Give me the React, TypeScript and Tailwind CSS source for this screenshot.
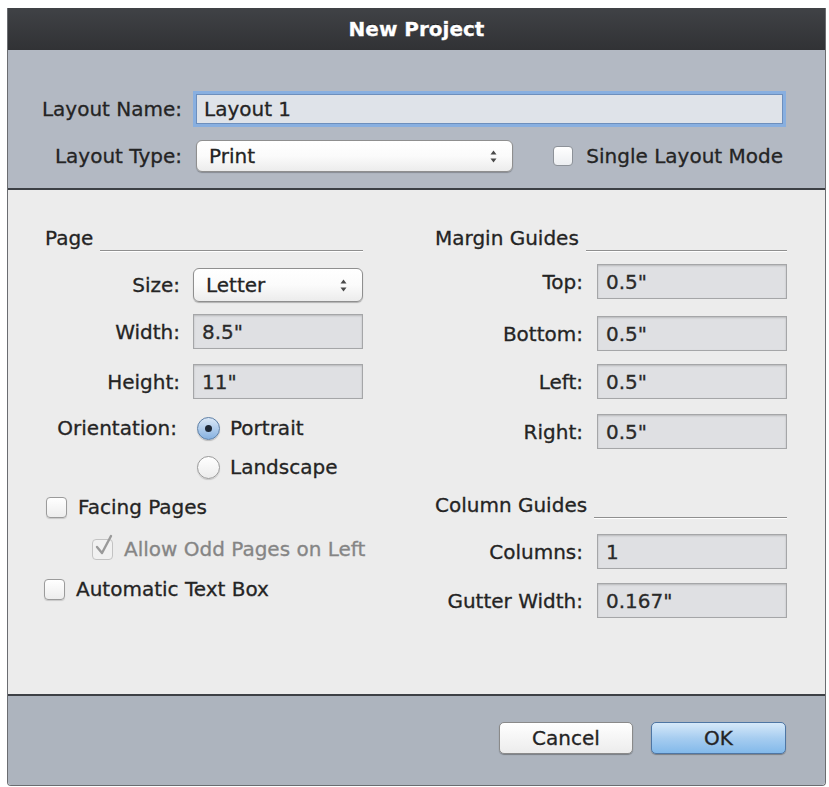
import React from "react";

function Arrows() {
  return (
    <svg width="9" height="15" viewBox="0 0 9 15" className="shrink-0">
      <path d="M4.5 1.5 L7.5 5.5 H1.5 Z" fill="#4a4a4a" />
      <path d="M4.5 13.5 L7.5 9.5 H1.5 Z" fill="#4a4a4a" />
    </svg>
  );
}

function Select({ value, className }: { value: string; className: string }) {
  return (
    <div
      className={
        "flex items-center justify-between pl-[12px] pr-[14px] rounded-[6px] border border-[#8f8f8f] bg-gradient-to-b from-white via-[#fbfbfb] to-[#ececec] shadow-[0_1px_1px_rgba(0,0,0,0.25)] " +
        className
      }
    >
      <span>{value}</span>
      <Arrows />
    </div>
  );
}

function Field({ value, className }: { value: string; className: string }) {
  return (
    <div
      className={
        "h-[35px] flex items-center pl-[8px] bg-[#dfe0e3] border border-[#a5a6a8] shadow-[inset_0_1px_2px_rgba(0,0,0,0.18)] text-[#2a2a2a] " +
        className
      }
    >
      {value}
    </div>
  );
}

function Checkbox() {
  return (
    <div className="w-[21px] h-[21px] shrink-0 rounded-[4px] border border-[#9b9b9b] bg-gradient-to-b from-white to-[#ededed] shadow-[0_1px_1px_rgba(0,0,0,0.15)]" />
  );
}

function Heading({ text }: { text: string }) {
  return (
    <div className="flex items-center h-[28px]">
      <span className="shrink-0">{text}</span>
      <div className="flex-1 self-end mb-[1px] ml-[7px] h-[1px] bg-[#8f8f8f] shadow-[0_1px_0_#ffffff]" />
    </div>
  );
}

export default function App() {
  return (
    <div className="w-[829px] h-[787px] bg-white pt-[8px] pl-[7px] font-['DejaVu_Sans',sans-serif] text-[20px] text-[#242424] leading-none whitespace-nowrap [-webkit-text-stroke:0.3px_currentColor]">
      <div className="w-[819px] h-[778px] flex flex-col border-x border-b border-[#6b6d71] rounded-b-[4px] overflow-hidden">
        {/* Title bar */}
        <div className="h-[42px] shrink-0 flex items-center justify-center bg-gradient-to-b from-[#404246] to-[#313235] text-white font-bold [text-shadow:0_-1px_0_rgba(0,0,0,0.6)]">
          New Project
        </div>

        {/* Top section */}
        <div className="h-[140px] shrink-0 bg-[#b3b9c3] border-b-2 border-[#3d4045] pt-[44px] pr-[42px]">
          <div className="flex items-center h-[30px]">
            <div className="w-[174px] text-right shrink-0">Layout Name:</div>
            <div className="ml-[14px] flex-1 h-[30px] flex items-center pl-[7px] bg-[#dfe3e9] border border-[#6d8fbd] ring-[3px] ring-[#88afe0]">
              Layout 1
            </div>
          </div>
          <div className="flex items-center h-[32px] mt-[16px]">
            <div className="w-[174px] text-right shrink-0">Layout Type:</div>
            <Select value="Print" className="ml-[14px] w-[321px] h-[32px]" />
            <div className="ml-[40px] w-[20px] h-[20px] shrink-0 rounded-[4px] border border-[#8d9299] bg-gradient-to-b from-white to-[#eceef1]" />
            <span className="ml-[13px]">Single Layout Mode</span>
          </div>
        </div>

        {/* Middle section */}
        <div className="flex-1 bg-[#ececec] flex pl-[37px] pt-[34px]">
          {/* Left column */}
          <div className="w-[318px] flex flex-col">
            <Heading text="Page" />
            <div className="flex items-center mt-[16px]">
              <div className="w-[135px] text-right shrink-0">Size:</div>
              <Select value="Letter" className="ml-[13px] w-[170px] h-[34px]" />
            </div>
            <div className="flex items-center mt-[12px]">
              <div className="w-[135px] text-right shrink-0">Width:</div>
              <Field value={'8.5"'} className="ml-[13px] w-[170px]" />
            </div>
            <div className="flex items-center mt-[15px]">
              <div className="w-[135px] text-right shrink-0">Height:</div>
              <Field value={'11"'} className="ml-[13px] w-[170px]" />
            </div>
            <div className="flex items-center h-[30px] mt-[14px]">
              <div className="w-[132px] text-right shrink-0">Orientation:</div>
              <div className="ml-[20px] w-[23px] h-[23px] shrink-0 rounded-full border border-[#5d7fa6] bg-gradient-to-b from-[#dbe8f6] to-[#86b1e0] flex items-center justify-center shadow-[0_1px_1px_rgba(0,0,0,0.2)]">
                <div className="w-[7px] h-[7px] rounded-full bg-[#1e2836]" />
              </div>
              <span className="ml-[10px]">Portrait</span>
            </div>
            <div className="flex items-center h-[30px] mt-[9px]">
              <div className="ml-[152px] w-[23px] h-[23px] shrink-0 rounded-full border border-[#9a9a9a] bg-gradient-to-b from-white to-[#ececec] shadow-[0_1px_1px_rgba(0,0,0,0.15)]" />
              <span className="ml-[10px]">Landscape</span>
            </div>
            <div className="flex items-center h-[30px] mt-[10px] ml-[1px]">
              <Checkbox />
              <span className="ml-[11px]">Facing Pages</span>
            </div>
            <div className="flex items-center h-[30px] mt-[12px] ml-[47px]">
              <div className="relative w-[21px] h-[21px] shrink-0 rounded-[4px] border border-[#c3c3c3] bg-[#f1f1f1]">
                <svg width="22" height="24" viewBox="0 0 22 24" className="absolute left-[0px] top-[-7px]">
                  <path d="M4 14 L9 20 L18 3" fill="none" stroke="#9a9a9a" strokeWidth="2.4" strokeLinecap="round" strokeLinejoin="round" />
                </svg>
              </div>
              <span className="ml-[11px] text-[#858585]">Allow Odd Pages on Left</span>
            </div>
            <div className="flex items-center h-[30px] mt-[10px] ml-[-1px]">
              <Checkbox />
              <span className="ml-[11px]">Automatic Text Box</span>
            </div>
          </div>

          {/* Right column */}
          <div className="ml-[72px] w-[352px] flex flex-col">
            <Heading text="Margin Guides" />
            <div className="flex items-center mt-[12px]">
              <div className="w-[148px] text-right shrink-0">Top:</div>
              <Field value={'0.5"'} className="ml-[14px] w-[190px]" />
            </div>
            <div className="flex items-center mt-[17px]">
              <div className="w-[148px] text-right shrink-0">Bottom:</div>
              <Field value={'0.5"'} className="ml-[14px] w-[190px]" />
            </div>
            <div className="flex items-center mt-[13px]">
              <div className="w-[148px] text-right shrink-0">Left:</div>
              <Field value={'0.5"'} className="ml-[14px] w-[190px]" />
            </div>
            <div className="flex items-center mt-[15px]">
              <div className="w-[148px] text-right shrink-0">Right:</div>
              <Field value={'0.5"'} className="ml-[14px] w-[190px]" />
            </div>
            <div className="mt-[42px]">
              <Heading text="Column Guides" />
            </div>
            <div className="flex items-center mt-[15px]">
              <div className="w-[148px] text-right shrink-0">Columns:</div>
              <Field value="1" className="ml-[14px] w-[190px]" />
            </div>
            <div className="flex items-center mt-[14px]">
              <div className="w-[148px] text-right shrink-0">Gutter Width:</div>
              <Field value={'0.167"'} className="ml-[14px] w-[190px]" />
            </div>
          </div>
        </div>

        {/* Bottom section */}
        <div className="h-[91px] shrink-0 bg-[#adb4be] border-t-2 border-[#3d4045] flex justify-end items-start pt-[26px] pr-[39px]">
          <div className="w-[134px] h-[32px] flex items-center justify-center rounded-[5px] border border-[#8a8a8a] bg-gradient-to-b from-white to-[#ececec] shadow-[0_1px_1px_rgba(0,0,0,0.3)]">
            Cancel
          </div>
          <div className="ml-[18px] w-[135px] h-[32px] flex items-center justify-center rounded-[5px] border border-[#4e76a4] bg-gradient-to-b from-[#d6e9f9] via-[#a7cdf0] to-[#82b9ea] shadow-[0_1px_1px_rgba(0,0,0,0.3)]">
            OK
          </div>
        </div>
      </div>
    </div>
  );
}
